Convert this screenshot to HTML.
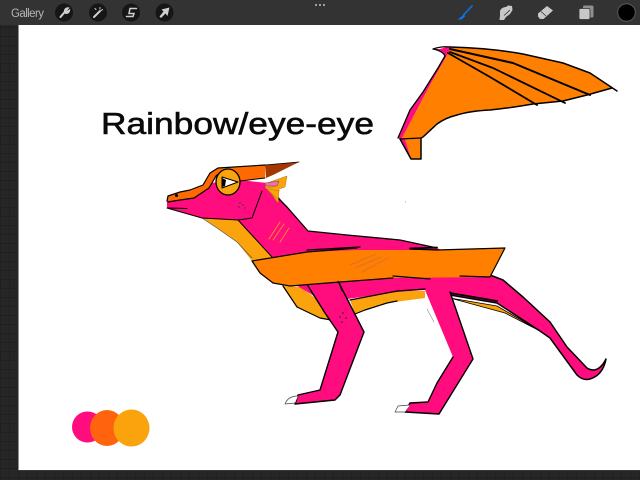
<!DOCTYPE html>
<html>
<head>
<meta charset="utf-8">
<style>
html,body{margin:0;padding:0;width:640px;height:480px;overflow:hidden;background:#242424}
svg{display:block}
text{font-family:"Liberation Sans",sans-serif}
</style>
</head>
<body>
<svg width="640" height="480" viewBox="0 0 640 480" xmlns="http://www.w3.org/2000/svg">
<defs>
<pattern id="g" width="9" height="9" patternUnits="userSpaceOnUse">
<rect width="9" height="9" fill="#262626"/>
<path d="M0 .5H9M.5 0V9" stroke="#202020" stroke-width="1"/>
</pattern>
<filter id="b" x="-5%" y="-5%" width="110%" height="110%"><feGaussianBlur stdDeviation="0.35"/></filter>
</defs>
<rect width="640" height="480" fill="url(#g)"/>
<rect x="18.500" y="25" width="621.500" height="445" fill="#fff"/>
<rect x="18" y="470" width="622" height="1" fill="#3a3a3a"/>

<!-- toolbar -->
<rect width="640" height="25" fill="#333"/>
<text x="11" y="17" font-size="11.500" fill="#b5b5b5" textLength="33">Gallery</text>
<circle cx="64" cy="12.500" r="9" fill="#161616"/>
<circle cx="98" cy="12.500" r="9" fill="#161616"/>
<circle cx="131" cy="12.500" r="9" fill="#161616"/>
<circle cx="164.500" cy="12.500" r="9" fill="#161616"/>
<g fill="none" stroke="#cfcfcf" stroke-linecap="round">
<path d="M60.500 17L65.500 11" stroke-width="2"/>
<path d="M64.500 11.500C64.500 9 66.500 7.500 68.500 8L66.500 10L67.500 11.500L69.500 10C69.500 12.500 67 14 65 13" stroke-width="1.300" fill="#cfcfcf"/>
<path d="M94 17L100 11" stroke-width="2"/>
<path d="M95 8.500L96 9.500M100 7.500V9M102.500 9.500L101.500 10.500" stroke-width="1"/>
<path d="M136.500 8.500H130L129 13.500H134L133 16.500H126.500" stroke-width="1.500"/>
</g>
<path d="M169.500 7.500L167.500 16L165.500 13.500L161 18L159.500 16.500L163.500 11.500L161.500 9.500Z" fill="#cfcfcf"/>
<circle cx="316" cy="5" r="1.100" fill="#aaa"/><circle cx="320" cy="5" r="1.100" fill="#aaa"/><circle cx="324" cy="5" r="1.100" fill="#aaa"/>
<!-- brush -->
<path d="M472.500 5.500L463 15.500" stroke="#0a74f2" stroke-width="1.500" fill="none"/>
<path d="M464.500 14L461.500 16.500L457.500 19.500L461.500 19.500L465 16.500Z" fill="#0a74f2"/>
<!-- smudge -->
<path d="M500 11C501 8 504 7 506 7L508 5.500L512 6L512.500 10L510 14L506 17L504 20H499.500L500 15.500Z" fill="#c8c8c8"/>
<path d="M504 15.500L510 10" stroke="#333" stroke-width=".8" fill="none"/>
<!-- eraser -->
<path d="M538 13.500L547 6L553 10.500L543.500 19L540 19L538 16.500Z" fill="#c8c8c8"/>
<path d="M541 11.500L546 16" stroke="#333" stroke-width=".8"/>
<!-- layers -->
<rect x="583" y="5.500" width="10.500" height="12" rx="1.500" fill="#8f8f8f"/>
<rect x="579" y="8.500" width="11" height="11" rx="1.500" fill="#c8c8c8" stroke="#333" stroke-width=".8"/>
<!-- colour -->
<circle cx="626.500" cy="12.500" r="8.800" fill="#000" stroke="#5a5a5a" stroke-width="1"/>

<!-- title -->
<text x="101" y="134" font-size="31" fill="#0a0a0a" stroke="#0a0a0a" stroke-width=".6" textLength="273" lengthAdjust="spacingAndGlyphs">Rainbow/eye-eye</text>

<!-- swatches -->
<g filter="url(#b)">
<circle cx="87.500" cy="427" r="15.500" fill="#ff0a7f"/>
<ellipse cx="107" cy="428" rx="17" ry="18" fill="#ff6408"/>
<ellipse cx="131.500" cy="428" rx="18" ry="18.500" fill="#faa30a"/>
</g>

<g filter="url(#b)" stroke-linejoin="round" stroke-linecap="round">
<!-- detached wing -->
<path d="M450 47Q490 48 523 54L563 63L590 73L612 88L587 95L563 101L533 104Q510 108 490 110Q470 111 457 115Q445 118 437 124L423 137L421 138V159H411L405 139L402 138L430 85L450 50Z" fill="#ff8000"/>
<path d="M433 49L440 49L450 46L450 50L430 85L402 138L405 139L411 159L400 139L398 138L410 110L423 92L438 68L445 56Q443 51 433 49Z" fill="#ff0a7f"/>
<path d="M450 47Q490 48 523 54L563 63L590 73L617 91" fill="none" stroke="#000" stroke-width="1.500"/>
<path d="M612 88L587 95L563 101L533 104Q510 108 490 110Q470 111 457 115Q445 118 437 124L423 137L421 138V159H411L400 139" fill="none" stroke="#000" stroke-width="1.500"/>
<path d="M400 139L421 138M398 138L410 110L423 92L438 68L445 56Q443 51 433 49Q442 46 450 47" fill="none" stroke="#000" stroke-width="1.300"/>
<path d="M450 49L513 63L590 95" fill="none" stroke="#000" stroke-width="2"/>
<path d="M450 52L493 68L565 103" fill="none" stroke="#000" stroke-width="1.800"/>
<path d="M448 53L490 77L537 105" fill="none" stroke="#000" stroke-width="1.800"/>

<!-- tail belly sliver -->
<path d="M450 298L497 306L540 331L505 313Z" fill="#faa30a" stroke="#000" stroke-width=".8"/>
<!-- chest/belly orange -->
<path d="M202 218L238 220L272 257L252 261L237 242L217 228Z" fill="#faa30a"/>
<path d="M202 218L217 228L237 242L252 258" fill="none" stroke="#555" stroke-width=".7"/>
<path d="M283 286L300 287L318 300L331 320L320 318L297 307Z" fill="#faa30a"/>
<path d="M350 300L397 291L425 291V298L387 303L365 310L355 314Z" fill="#faa30a"/>
<path d="M283 286L297 307L320 318L331 320M355 314L365 310L387 303L397 301" fill="none" stroke="#000" stroke-width="1.200"/>

<!-- body -->
<path d="M167 200L167 208L202 218L238 220L272 257L300 286L340 300L397 292L425 290L450 295L497 303L540 331L550 338L577 375Q583 381 590 379Q603 375 606 359Q601 369 594 370Q590 370 587 368L567 347L550 322L523 297L503 280L490 275L437 248L400 240L347 235L308 231L287 207L267 183L240 180L210 183L190 190Z" fill="#ff0a7f"/>
<path d="M294 284L310 284L319 299Z" fill="#ff0a7f"/>
<path d="M267 187L287 207L308 231L347 235L400 240L437 248" fill="none" stroke="#000" stroke-width="1.300"/>
<path d="M490 275L503 280L523 297L550 322L567 347L587 368Q590 370 594 370Q601 369 606 359Q603 375 590 379Q583 381 577 375L550 338L540 331L497 303L450 295" fill="none" stroke="#000" stroke-width="1.500"/>
<path d="M350 300L397 291L425 289" fill="none" stroke="#000" stroke-width="1.200"/>
<path d="M450 293L497 301" fill="none" stroke="#000" stroke-width="1.800"/>
<path d="M167 208L202 218L238 220M252 218L262 191M238 220L252 218" fill="none" stroke="#000" stroke-width="1"/>
<path d="M238 220L272 257" fill="none" stroke="#000" stroke-width="1"/>
<path d="M168 208L187 208.500" stroke="#000" stroke-width="1" fill="none"/>
<!-- neck marks -->
<path d="M280 222L269 239M284 224L273 240M289 228L280 242" stroke="#f58a2a" stroke-width="1" fill="none"/>
<g fill="#333" stroke="none">
<circle cx="240" cy="203" r=".7"/><circle cx="243" cy="205" r=".7"/><circle cx="239" cy="207" r=".7"/><circle cx="245" cy="208" r=".6"/>
</g>

<!-- front leg -->
<path d="M308 286L338 281L364 332L340 395L335 400L295 404L298 395L320 390L338 332L325 313Z" fill="#ff0a7f"/>
<path d="M308 286L325 313L338 332L320 390L298 395L295 404L335 400L340 395L364 332L338 281" fill="none" stroke="#000" stroke-width="1.400"/>
<path d="M298 396Q288 396 285 404L295 403" fill="#fff" stroke="#444" stroke-width=".7"/>
<g fill="#222" stroke="none"><circle cx="343" cy="313" r=".8"/><circle cx="340" cy="317" r=".8"/><circle cx="346" cy="318" r=".8"/><circle cx="342" cy="322" r=".8"/></g>

<!-- back leg -->
<path d="M425 290L450 292L473 359L439 414L405 412L410 403L428 402L437 383L453 357Z" fill="#ff0a7f"/>
<path d="M450 292L473 359L439 414L405 412L410 403L428 402L437 383L453 357" fill="none" stroke="#000" stroke-width="1.400"/>
<path d="M410 405L398 406L395 412L405 412" fill="#fff" stroke="#444" stroke-width=".7"/>
<path d="M427 309L434 322" stroke="#888" stroke-width=".6" fill="none"/>

<!-- wing on body -->
<path d="M252 261L307 252L357 250L437 250L505 248L490 277L393 278L340 282L290 286L273 283L260 273Z" fill="#ff8000"/>
<path d="M252 261L307 252L357 248M307 250L360 247M410 249L437 250L505 248L490 277L460 276M393 276L430 279M340 282L290 286L273 283L260 273L252 261M340 282L393 278" fill="none" stroke="#000" stroke-width="1.200"/>
<path d="M410 248.500L437 247.500" stroke="#000" stroke-width="1.800" fill="none"/>
<path d="M350 265L376 254M355 268L381 257M362 272L388 258" stroke="#e0702a" stroke-width="1" fill="none"/>
<path d="M338 281L342 291" stroke="#000" stroke-width=".8" fill="none"/>

<!-- ear frill -->
<path d="M267 183L287 176L285 187L279 189L278 203L270 192L265 187Z" fill="#faa30a" stroke="#b97400" stroke-width=".5"/>
<path d="M265 183L279 181L277 186L266 186Z" fill="#f56ea8" stroke="#555" stroke-width=".5"/>
<path d="M268 188L277 186M268 189L280 191M268 190L276 198" stroke="#c37a10" stroke-width=".6" fill="none"/>

<!-- head plate -->
<path d="M167 201L168 196L180 192L190 190L203 185L210 173L218 168L265 165L265 178L240 181L228 170L216 176L209 188L194 198L180 200Z" fill="#ff6a00"/>
<path d="M167 201L168 196L180 192L190 190L203 185L210 173L218 168L265 165M168 202L180 200L194 198L209 188L216 176L222 171" fill="none" stroke="#000" stroke-width="1.200"/>
<path d="M240 181L265 178" fill="none" stroke="#000" stroke-width="1"/>
<circle cx="176.500" cy="195.500" r="1.500" fill="#000" stroke="none"/>
<!-- horn -->
<path d="M265 165L299 162L273 175L266 178Z" fill="#a23800"/>
<path d="M265 165L299 162" stroke="#000" stroke-width=".8" fill="none"/>
<!-- eye -->
<ellipse cx="228" cy="182" rx="12" ry="13" fill="#faa30a" stroke="#000" stroke-width="1.300"/>
<path d="M222 177L238 182L222 188Z" fill="#fff" stroke="#000" stroke-width="1"/>
<path d="M222 178L226 180L225 186L222 187Z" fill="#000"/>
</g>
<circle cx="405.500" cy="202" r=".5" fill="#888"/>
</svg>
</body>
</html>
